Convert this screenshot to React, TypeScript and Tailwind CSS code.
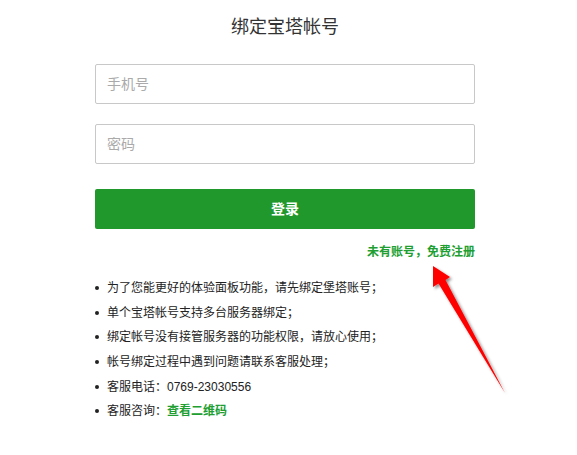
import React from "react";

export default function App() {
  const items: React.ReactNode[] = [
    "为了您能更好的体验面板功能，请先绑定堡塔账号；",
    "单个宝塔帐号支持多台服务器绑定；",
    "绑定帐号没有接管服务器的功能权限，请放心使用；",
    "帐号绑定过程中遇到问题请联系客服处理；",
    <>客服电话：0769-23030556</>,
    <>
      客服咨询：<span className="text-[#209e31] font-bold">查看二维码</span>
    </>,
  ];
  return (
    <div
      className="relative w-[577px] h-[455px] bg-white overflow-hidden"
      style={{ fontFamily: '"Liberation Sans","Noto Sans CJK SC",sans-serif' }}
    >
      <div className="ml-[95px] w-[380px] flex flex-col pt-[15px]">
        <h1 className="text-center text-[18px] leading-[24px] text-[#333] font-normal">
          绑定宝塔帐号
        </h1>
        <div className="mt-[25px] h-[40px] border border-[#c8c8c8] rounded-[2px] flex items-center pl-[11px] text-[14px] text-[#aaa]">
          手机号
        </div>
        <div className="mt-[20px] h-[40px] border border-[#c8c8c8] rounded-[2px] flex items-center pl-[11px] text-[14px] text-[#aaa]">
          密码
        </div>
        <div className="mt-[25px] h-[40px] bg-[#20982c] rounded-[2px] flex items-center justify-center text-white text-[14px] font-bold">
          登录
        </div>
        <div className="mt-[13px] h-[20px] leading-[20px] text-right text-[12px] font-bold text-[#209e31]">
          未有账号，免费注册
        </div>
        <ul className="mt-[14px] flex flex-col text-[12px] text-[#222]">
          {items.map((t, i) => (
            <li key={i} className="flex items-center h-[24.6px]">
              <span className="w-[4px] h-[4px] rounded-full bg-[#222] ml-[0px] mr-[8px]" />
              <span>{t}</span>
            </li>
          ))}
        </ul>
      </div>
      <svg
        className="absolute left-0 top-0 pointer-events-none"
        width="577"
        height="455"
        viewBox="0 0 577 455"
      >
        <defs>
          <filter id="sh" x="-20%" y="-20%" width="140%" height="140%">
            <feDropShadow dx="2" dy="2" stdDeviation="1.5" floodColor="#000" floodOpacity="0.45" />
          </filter>
        </defs>
        <polygon
          points="433,266 450,277 445.5,280 505,393 438.5,283.5 433,287"
          fill="#ff0000"
          filter="url(#sh)"
        />
      </svg>
    </div>
  );
}
